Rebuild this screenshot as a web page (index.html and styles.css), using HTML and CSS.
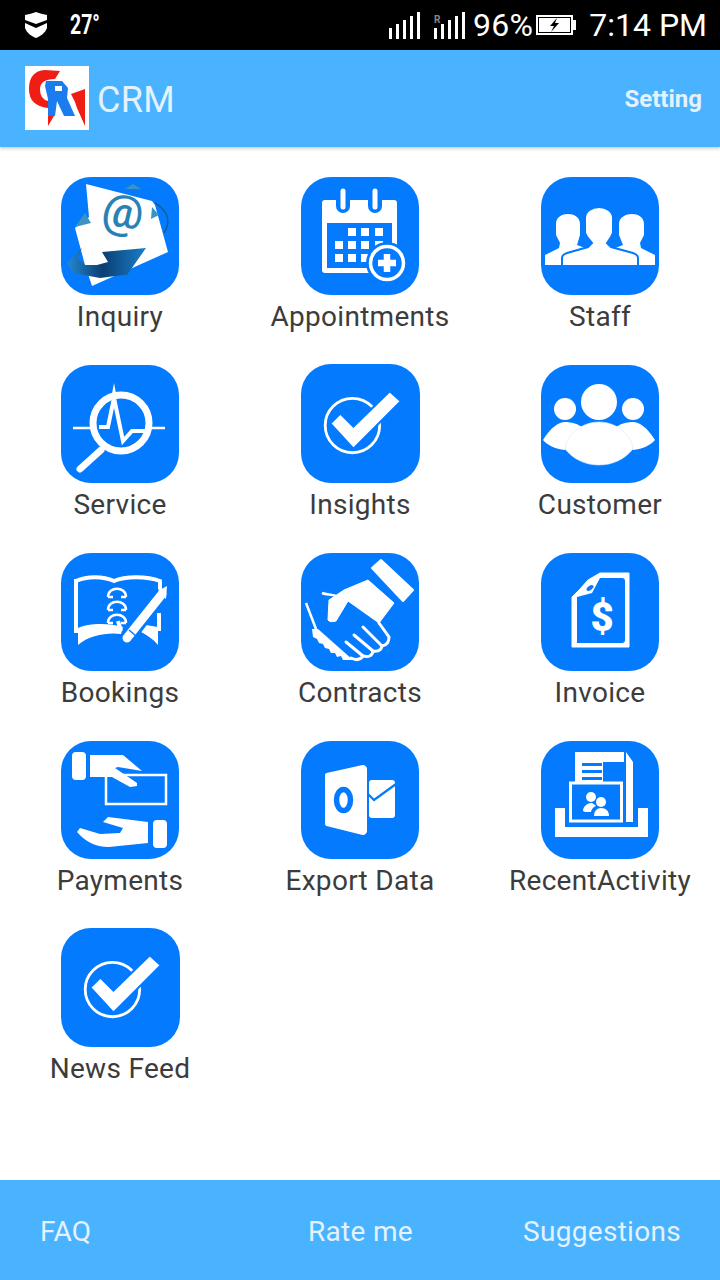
FILE: index.html
```html
<!DOCTYPE html>
<html lang="en">
<head>
  <meta charset="UTF-8">
  <title>CRM</title>
  <link rel="stylesheet" href="styles.css">
</head>
<body>
<div class="page">
  <div class="statusbar">
    <div class="status-left">
      <svg class="shield" viewBox="0 0 24 28" width="24" height="28"><path d="M1 4Q7 3 12 1 17 3 23 4V9L12 13 1 9Z" fill="#fff"/><path d="M1 12 12 17 23 12V17C21 22 17 25 12 27 7 25 3 22 1 17Z" fill="#fff"/></svg>
      <span class="temp">27°</span>
    </div>
    <div class="status-right">
      <svg class="signal" viewBox="0 0 32 28" width="32" height="28"><g fill="#fff"><rect x="0" y="17" width="3" height="11"/><rect x="7" y="13" width="3" height="15"/><rect x="14" y="9" width="3" height="19"/><rect x="21" y="5" width="3" height="23"/><rect x="28" y="1" width="3" height="27"/></g></svg>
      <svg class="signal two" viewBox="0 0 32 28" width="32" height="28"><g fill="#fff"><rect x="0" y="17" width="3" height="11"/><rect x="7" y="13" width="3" height="15"/><rect x="14" y="9" width="3" height="19"/><rect x="21" y="5" width="3" height="23"/><rect x="28" y="1" width="3" height="27"/></g><text x="0" y="12" class="roam">R</text></svg>
      <span class="percent">96%</span>
      <svg class="battery" viewBox="0 0 42 22" width="42" height="22"><rect x="1" y="1" width="37" height="20" fill="#fff"/><rect x="3" y="3" width="33" height="16" fill="#000"/><rect x="4" y="4" width="31" height="14" fill="#fff"/><rect x="38" y="6" width="3" height="10" fill="#fff"/><path d="M22 4 15 12H19L16 18 24 9H20Z" fill="#000"/></svg>
      <span class="clock">7:14 PM</span>
    </div>
  </div>

  <header class="appbar">
    <div class="brand">
      <svg class="logo" viewBox="0 0 64 64" width="64" height="64">
        <rect width="64" height="64" fill="#fff"/>
        <path d="M35 5 30 13Q15 13 15 23 15 33 23 35V42Q4 40 4 23 4 5 20 4Z" fill="#f01d14"/>
        <path d="M46 28 60 23V60L52 42 50 36Z" fill="#f01d14"/>
        <path d="M23 50H29L23 60Z" fill="#f01d14"/>
        <path d="M21 15H37L43 22 42 32 50 50H39L32 35 30 50H23V33L20 20Z" fill="#1b7cf0"/>
        <rect x="30" y="20" width="7" height="5" fill="#fff"/>
      </svg>
      <span class="brand-name">CRM</span>
    </div>
    <a class="setting">Setting</a>
  </header>

  <main class="grid">
    <div class="item">
      <div class="tile">
        <svg viewBox="0 0 118 118">
          <path d="M94 26C104 32 112 42 103 56" fill="none" stroke="#0f5f9f" stroke-width="1.500"/>
          <path d="M64 12 72 7 80 12Z" fill="#3d93c0"/>
          <path d="M25 7 91 24 94 28 107 75 31 109 24 88 14 51 28 40Z" fill="#fff"/>
          <path d="M24 36 14 50 30 46Z" fill="#3d93c0"/>
          <path d="M91 30 98 38 90 42Z" fill="#3d93c0"/>
          <text x="62" y="50" class="at" transform="rotate(8 62 36)">@</text>
          <defs><linearGradient id="sw" x1="0" x2="1" y1="0" y2="0"><stop offset="0" stop-color="#2488d0"/><stop offset=".45" stop-color="#0a3f72"/><stop offset="1" stop-color="#1a7ecb"/></linearGradient></defs>
          <path d="M21 71 6 86 12 96 39 101 62 98 66 98 85 71 41 75 47 85 36 88 24 88 17 81Z" fill="url(#sw)"/>
        </svg>
      </div>
      <span class="label">Inquiry</span>
    </div>

    <div class="item">
      <div class="tile">
        <svg viewBox="0 0 118 118">
          <rect x="21" y="23" width="75" height="73" rx="3" fill="#fff"/>
          <rect x="26" y="46" width="65" height="45" fill="#047bff"/>
          <g fill="#047bff"><rect x="35" y="16" width="14" height="20" rx="7"/><rect x="67" y="16" width="14" height="20" rx="7"/></g>
          <g stroke="#fff" stroke-width="5" stroke-linecap="round"><path d="M42 14V30"/><path d="M74 14V30"/></g>
          <g fill="#fff">
            <rect x="47" y="51" width="8" height="8"/><rect x="60" y="51" width="8" height="8"/><rect x="74" y="51" width="8" height="8"/>
            <rect x="34" y="64" width="8" height="8"/><rect x="47" y="64" width="8" height="8"/><rect x="60" y="64" width="8" height="8"/><rect x="74" y="64" width="8" height="8"/>
            <rect x="34" y="77" width="8" height="8"/><rect x="47" y="77" width="8" height="8"/><rect x="60" y="77" width="8" height="8"/>
          </g>
          <circle cx="86" cy="86" r="21" fill="#047bff"/>
          <circle cx="86" cy="86" r="16.500" fill="#047bff" stroke="#fff" stroke-width="3.500"/>
          <path d="M86 77V95M77 86H95" stroke="#fff" stroke-width="6.500"/>
        </svg>
      </div>
      <span class="label">Appointments</span>
    </div>

    <div class="item">
      <div class="tile">
        <svg viewBox="0 0 118 118">
          <g fill="#fff">
            <path d="M4 88V78L18 71 19 66 15 58V47C15 40 21 37 27 37 33 37 39 40 39 47V58L36 68 44 71 22 88Z"/>
            <path d="M114 88V78L100 71 99 66 103 58V47C103 40 97 37 91 37 85 37 78 40 78 47V58L82 68 74 71 96 88Z"/>
            <path d="M21 89V81C21 78 23 77 26 76L47 70 51 66 46 60 44 56V41C44 34 51 30 58 30 65 30 72 34 72 41V56L70 60 66 66 70 70 92 76C95 77 97 78 97 81V89Z" stroke="#047bff" stroke-width="2"/>
          </g>
          <rect x="3" y="88" width="112" height="4" fill="#047bff"/>
        </svg>
      </div>
      <span class="label">Staff</span>
    </div>

    <div class="item">
      <div class="tile">
        <svg viewBox="0 0 118 118">
          <g fill="none" stroke="#fff">
            <circle cx="60" cy="58" r="28" stroke-width="7"/>
            <path d="M12 63H34M84 63H104" stroke-width="2.500"/>
            <path d="M40 85 19 104" stroke-width="7" stroke-linecap="round"/>
            <path d="M38 62H47L53 33 62 76 71 66H84" stroke-width="4"/>
          </g>
          <path d="M53 18 56 34H50Z" fill="#fff"/>
        </svg>
      </div>
      <span class="label">Service</span>
    </div>

    <div class="item">
      <div class="tile big">
        <svg viewBox="0 0 118 118">
          <circle cx="51" cy="61" r="27" fill="none" stroke="#fff" stroke-width="2.800"/>
          <path d="M29 59 52 84 99 37 88 27 52 62 39 49Z" fill="#fff" stroke="#047bff" stroke-width="2"/>
        </svg>
      </div>
      <span class="label">Insights</span>
    </div>

    <div class="item">
      <div class="tile">
        <svg viewBox="0 0 118 118">
          <g fill="#fff">
            <circle cx="58" cy="37" r="18"/><circle cx="24" cy="44" r="11"/><circle cx="92" cy="44" r="11"/>
            <path d="M2 75C10 62 18 57 24 57 30 57 38 59 42 63 32 69 26 76 24 85 14 84 6 80 2 75Z"/>
            <path d="M114 75C106 62 98 57 92 57 86 57 78 59 74 63 84 69 90 76 92 85 102 84 110 80 114 75Z"/>
            <path d="M24 84C26 68 42 57 58 57 74 57 90 68 92 84 84 94 72 100 58 100 44 100 32 94 24 84Z" stroke="#d8ebfa" stroke-width=".6"/>
          </g>
        </svg>
      </div>
      <span class="label">Customer</span>
    </div>

    <div class="item">
      <div class="tile">
        <svg viewBox="0 0 118 118">
          <g fill="none" stroke="#fff" stroke-width="4">
            <path d="M15 28C26 23 42 23 53 28 64 23 86 23 99 28V44"/>
            <path d="M98 60V78"/>
            <path d="M15 26V80"/>
          </g>
          <path d="M17 75C28 70 48 70 62 74L60 81C48 79 28 82 17 92Z" fill="#fff"/>
          <path d="M85 72 97 74V92C92 86 86 82 80 79Z" fill="#fff"/>
          <g fill="none" stroke="#fff" stroke-width="2.500">
            <path d="M47 44C47 33 65 33 65 44M47 57C47 46 65 46 65 57M47 70C47 59 65 59 65 70"/>
            <path d="M47 44H52M60 44H65M47 57H52M60 57H65M47 70H52M60 70H65"/>
            <path d="M57 68 60 78" stroke-width="4"/>
          </g>
          <path d="M102 40 66 86" stroke="#047bff" stroke-width="14"/>
          <path d="M101 41 66 85" stroke="#fff" stroke-width="9" stroke-linecap="round"/>
          <path d="M97 38 106 33 105 46Z" fill="#fff"/>
          <path d="M68 77 75 83" stroke="#047bff" stroke-width="1.500"/>
        </svg>
      </div>
      <span class="label">Bookings</span>
    </div>

    <div class="item">
      <div class="tile">
        <svg viewBox="0 0 118 118">
          <path d="M71 15 80 7 112 37 102 48Z" fill="#fff" stroke="#fff" stroke-width="2" stroke-linejoin="round"/>
          <path d="M67 27 93 50 78 70 47 48 35 68C32 69 28 69 27 67L28 47 43 37Z" fill="#fff" stroke="#fff" stroke-width="1" stroke-linejoin="round"/>
          <g fill="none" stroke="#fff" stroke-width="3" stroke-linecap="round">
            <path d="M78 70 88 84Q88 92 81 93L62 74"/>
            <path d="M81 93Q80 99 72 98L53 82"/>
            <path d="M72 98Q71 105 62 103L45 89"/>
            <path d="M62 103Q58 109 50 105"/>
          </g>
          <path d="M5 50 15 76" stroke="#fff" stroke-width="2.500"/>
          <path d="M21 40C26 42 30 41 35 43" fill="none" stroke="#fff" stroke-width="2.500"/>
          <path d="M11 76H17L52 107 42 107 40 103 36 104 34 100 30 100 28 96 24 95 22 91 18 90 16 86 12 84Z" fill="#fff"/>
        </svg>
      </div>
      <span class="label">Contracts</span>
    </div>

    <div class="item">
      <div class="tile">
        <svg viewBox="0 0 118 118">
          <path d="M59 20H88V94H31V44L39 36 47 27Z" fill="#fff" stroke="#fff" stroke-width="1" stroke-linejoin="round"/>
          <path d="M59 25H81Q84 25 84 28V87Q84 90 81 90H36V44L51 40Z" fill="#047bff"/>
          <ellipse cx="49" cy="35" rx="4" ry="2" transform="rotate(-35 49 35)" fill="#047bff"/>
          <text x="61" y="78" class="dollar">$</text>
        </svg>
      </div>
      <span class="label">Invoice</span>
    </div>

    <div class="item">
      <div class="tile">
        <svg viewBox="0 0 118 118">
          <rect x="11" y="11" width="14" height="28" rx="4" fill="#fff"/>
          <rect x="45" y="34" width="60" height="29" fill="none" stroke="#fff" stroke-width="2.500"/>
          <path d="M29 14H62L81 30 57 26 54 27 76 42 76 45 69 46 51 36H29Z" fill="#fff"/>
          <rect x="92" y="79" width="14" height="28" rx="4" fill="#fff"/>
          <path d="M87 81 47 76 42 81 62 87 59 92 39 93 19 87 16 91C24 100 34 106 48 106L87 102Z" fill="#fff"/>
        </svg>
      </div>
      <span class="label">Payments</span>
    </div>

    <div class="item">
      <div class="tile">
        <svg viewBox="0 0 118 118">
          <path d="M26 34 62 26C63 26 64 27 64 28V90C64 91 63 92 62 92L26 83Z" fill="#fff" stroke="#fff" stroke-width="4" stroke-linejoin="round"/>
          <ellipse cx="42.500" cy="59" rx="7" ry="10.500" fill="none" stroke="#047bff" stroke-width="5.500"/>
          <rect x="68" y="39" width="26" height="38" rx="3" fill="#fff"/>
          <path d="M67 53 73 59 95 43" fill="none" stroke="#047bff" stroke-width="2.200"/>
        </svg>
      </div>
      <span class="label">Export Data</span>
    </div>

    <div class="item">
      <div class="tile">
        <svg viewBox="0 0 118 118">
          <path d="M34 11H83V21H62V41H34Z" fill="#fff"/>
          <path d="M85 11 92 21V81H85Z" fill="#fff"/>
          <path d="M41 22H61V25H41ZM41 29H61V32H41ZM41 36H61V39H41Z" fill="#047bff"/>
          <rect x="29.500" y="42" width="51" height="38" fill="#047bff" stroke="#fff" stroke-width="3"/>
          <path d="M14 67H24V86H97V67H107V96H14Z" fill="#fff"/>
          <g fill="#fff">
            <circle cx="50" cy="56" r="5"/><circle cx="60" cy="61" r="5"/>
            <path d="M42 70C42 65 47 62 50 62 52 62 54 64 55 65 52 66 50 69 50 71H44Z"/>
            <path d="M53 75C53 70 56 67 60 67 65 67 68 70 68 75Z"/>
          </g>
        </svg>
      </div>
      <span class="label">RecentActivity</span>
    </div>

    <div class="item">
      <div class="tile big">
        <svg viewBox="0 0 118 118">
          <circle cx="51" cy="61" r="27" fill="none" stroke="#fff" stroke-width="2.800"/>
          <path d="M29 59 52 84 99 37 88 27 52 62 39 49Z" fill="#fff" stroke="#047bff" stroke-width="2"/>
        </svg>
      </div>
      <span class="label">News Feed</span>
    </div>
  </main>

  <footer class="footer">
    <a class="foot-left">FAQ</a>
    <a>Rate me</a>
    <a class="foot-right">Suggestions</a>
  </footer>
</div>
</body>
</html>
```

FILE: styles.css
```css
body {
  margin: 0;
  background: #fff;
  font-family: Roboto, sans-serif;
}
.page {
  display: flex;
  flex-direction: column;
  width: 720px;
  height: 1280px;
  overflow: hidden;
}
.statusbar {
  display: flex;
  justify-content: space-between;
  align-items: center;
  height: 50px;
  padding: 0 13px 0 24px;
  background: #000;
  color: #fff;
  box-sizing: border-box;
}
.status-left {
  display: flex;
  align-items: center;
}
.shield {
  display: block;
}
.temp {
  width: 28px;
  margin-left: 22px;
  font-size: 27px;
  font-weight: 700;
  transform: scaleX(.72);
  transform-origin: left center;
}
.status-right {
  display: flex;
  align-items: center;
}
.signal {
  display: block;
  margin-right: 13px;
}
.signal.two {
  margin-right: 7px;
}
.roam {
  font-family: Roboto, sans-serif;
  font-size: 10px;
  font-weight: 700;
  fill: #888;
}
.percent {
  font-size: 32px;
  letter-spacing: .3px;
}
.battery {
  display: block;
  margin: 0 12px 0 2px;
}
.clock {
  font-size: 32px;
}
.appbar {
  display: flex;
  justify-content: space-between;
  align-items: center;
  height: 97px;
  padding: 0 18px 1px 25px;
  box-sizing: border-box;
  background: #4ab3ff;
  box-shadow: 0 2px 3px rgba(0, 0, 0, .18);
  position: relative;
}
.brand {
  display: flex;
  align-items: center;
}
.logo {
  display: block;
}
.brand-name {
  margin: 3px 0 0 8px;
  font-size: 36px;
  letter-spacing: .3px;
  color: #e3f2fd;
}
.setting {
  margin-top: 2px;
  font-size: 24px;
  font-weight: 700;
  color: #e3f2fd;
}
.grid {
  display: grid;
  grid-template-columns: repeat(3, 240px);
  grid-auto-rows: 188px;
  flex: 1;
  padding-top: 30px;
}
.item {
  display: flex;
  flex-direction: column;
  align-items: center;
}
.tile {
  width: 118px;
  height: 118px;
  border-radius: 30px;
  background: #047bff;
  overflow: hidden;
}
.tile svg {
  display: block;
  width: 100%;
  height: 100%;
}
.tile.big {
  width: 119px;
  height: 119px;
  margin-top: -1px;
}
.label {
  margin-top: 4px;
  font-size: 28px;
  line-height: 36px;
  letter-spacing: .3px;
  color: #3c3c3c;
  white-space: nowrap;
}
.at {
  font-family: Roboto, sans-serif;
  font-size: 46px;
  font-weight: 500;
  text-anchor: middle;
  fill: #2a82b4;
}
.dollar {
  font-family: Roboto, sans-serif;
  font-size: 40px;
  font-weight: 900;
  text-anchor: middle;
  fill: #fff;
}
.footer {
  display: grid;
  grid-template-columns: 1fr auto 1fr;
  align-items: center;
  height: 100px;
  padding: 2px 39px 0 40px;
  box-sizing: border-box;
  background: #4ab3ff;
  font-size: 28px;
  letter-spacing: .3px;
  color: #e3f2fd;
}
.foot-left {
  justify-self: start;
}
.foot-right {
  justify-self: end;
}
```
